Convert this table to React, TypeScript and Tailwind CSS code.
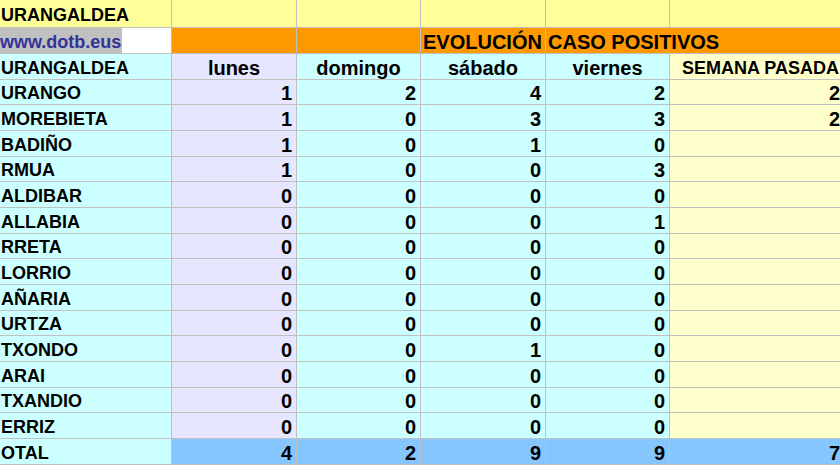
const rows: { name: string; cut: number; v: (number | null)[] }[] = [
  { name: "DURANGO", cut: 1, v: [1, 2, 4, 2, 2] },
  { name: "AMOREBIETA", cut: 1, v: [1, 0, 3, 3, 2] },
  { name: "ABADIÑO", cut: 1, v: [1, 0, 1, 0, null] },
  { name: "ERMUA", cut: 1, v: [1, 0, 0, 3, null] },
  { name: "ZALDIBAR", cut: 1, v: [0, 0, 0, 0, null] },
  { name: "MALLABIA", cut: 1, v: [0, 0, 0, 1, null] },
  { name: "IURRETA", cut: 2, v: [0, 0, 0, 0, null] },
  { name: "ELORRIO", cut: 1, v: [0, 0, 0, 0, null] },
  { name: "MAÑARIA", cut: 1, v: [0, 0, 0, 0, null] },
  { name: "IZURTZA", cut: 2, v: [0, 0, 0, 0, null] },
  { name: "ATXONDO", cut: 1, v: [0, 0, 1, 0, null] },
  { name: "GARAI", cut: 1, v: [0, 0, 0, 0, null] },
  { name: "OTXANDIO", cut: 1, v: [0, 0, 0, 0, null] },
  { name: "BERRIZ", cut: 1, v: [0, 0, 0, 0, null] },
];

const widths = ["w-[125px]", "w-[124px]", "w-[125px]", "w-[124px]", "w-[175px]"];

// row heights alternate 26/25 so the grid lines land where the sheet has them
function rowH(i: number) {
  return i % 3 === 0 ? "h-[25px]" : "h-[26px]";
}

const cell = "shrink-0 border-r border-b border-[#c0c0c0] flex items-center whitespace-nowrap";
const nameCell = `${cell} w-[172px] bg-[#ccffff] overflow-hidden text-[18px] pt-[2px]`;

// the sheet is scrolled a little to the right, so the first letters sit past the left edge
function Name({ text, cut = 1 }: { text: string; cut?: number }) {
  return (
    <span className="relative pl-[1px]">
      <span className="absolute right-full">{text.slice(0, cut)}</span>
      {text.slice(cut)}
    </span>
  );
}

export default function App() {
  return (
    <div
      className="w-[840px] h-[467px] overflow-hidden bg-white text-[20px] font-bold leading-none text-black"
      style={{ fontFamily: '"Liberation Sans", Arial, sans-serif' }}
    >
      {/* title row */}
      <div className="flex h-[28px]">
        <div className={`${nameCell} bg-[#ffff99]`}>
          <Name text="DURANGALDEA" />
        </div>
        {widths.map((w, i) => (
          <div key={i} className={`${cell} ${w} bg-[#ffff99]`} />
        ))}
      </div>

      {/* url + orange banner */}
      <div className="flex h-[26px]">
        <div className={`${cell} w-[172px] bg-white overflow-hidden items-stretch text-[18px]`}>
          <span className="bg-[#c0c0c0] text-[#333399] flex items-center pt-[2px] pr-[1px]">www.dotb.eus</span>
        </div>
        <div className={`${cell} w-[125px] bg-[#ff9900]`} />
        <div className={`${cell} w-[124px] bg-[#ff9900]`} />
        <div className={`${cell} w-[125px] bg-[#ff9900] pl-[2px] pt-[2px]`}>EVOLUCIÓN</div>
        <div className={`${cell} w-[124px] bg-[#ff9900] pl-[2px] pt-[2px] border-r-0`}>
          <span className="relative z-[1]">CASO POSITIVOS</span>
        </div>
        <div className={`${cell} w-[176px] bg-[#ff9900]`} />
      </div>

      {/* header */}
      <div className="flex h-[26px]">
        <div className={nameCell}>
          <Name text="DURANGALDEA" />
        </div>
        <div className={`${cell} w-[125px] bg-[#e6e6ff] justify-center pt-[2px]`}>lunes</div>
        <div className={`${cell} w-[124px] bg-[#ccffff] justify-center pt-[2px]`}>domingo</div>
        <div className={`${cell} w-[125px] bg-[#ccffff] justify-center pt-[2px]`}>sábado</div>
        <div className={`${cell} w-[124px] bg-[#ccffff] justify-center pt-[2px]`}>viernes</div>
        <div className={`${cell} w-[175px] bg-[#ffffcc] pl-[12px] pt-[2px] text-[18px]`}>SEMANA PASADA</div>
      </div>

      {rows.map((r, i) => (
        <div key={r.name} className={`flex ${rowH(i + 3)}`}>
          <div className={nameCell}>
            <Name text={r.name} cut={r.cut} />
          </div>
          {r.v.map((n, j) => (
            <div
              key={j}
              className={`${cell} ${widths[j]} justify-end pr-[4px] pt-[2px] ${
                j === 0 ? "bg-[#e6e6ff]" : j === 4 ? "bg-[#ffffcc]" : "bg-[#ccffff]"
              }`}
            >
              {n}
            </div>
          ))}
        </div>
      ))}

      {/* total */}
      <div className="flex h-[26px]">
        <div className={nameCell}>
          <Name text="TOTAL" />
        </div>
        {[4, 2, 9, 9, 7].map((n, j) => (
          <div key={j} className={`${cell} ${widths[j]} bg-[#85c6ff] justify-end pr-[4px] pt-[2px]`}>
            {n}
          </div>
        ))}
      </div>
    </div>
  );
}
